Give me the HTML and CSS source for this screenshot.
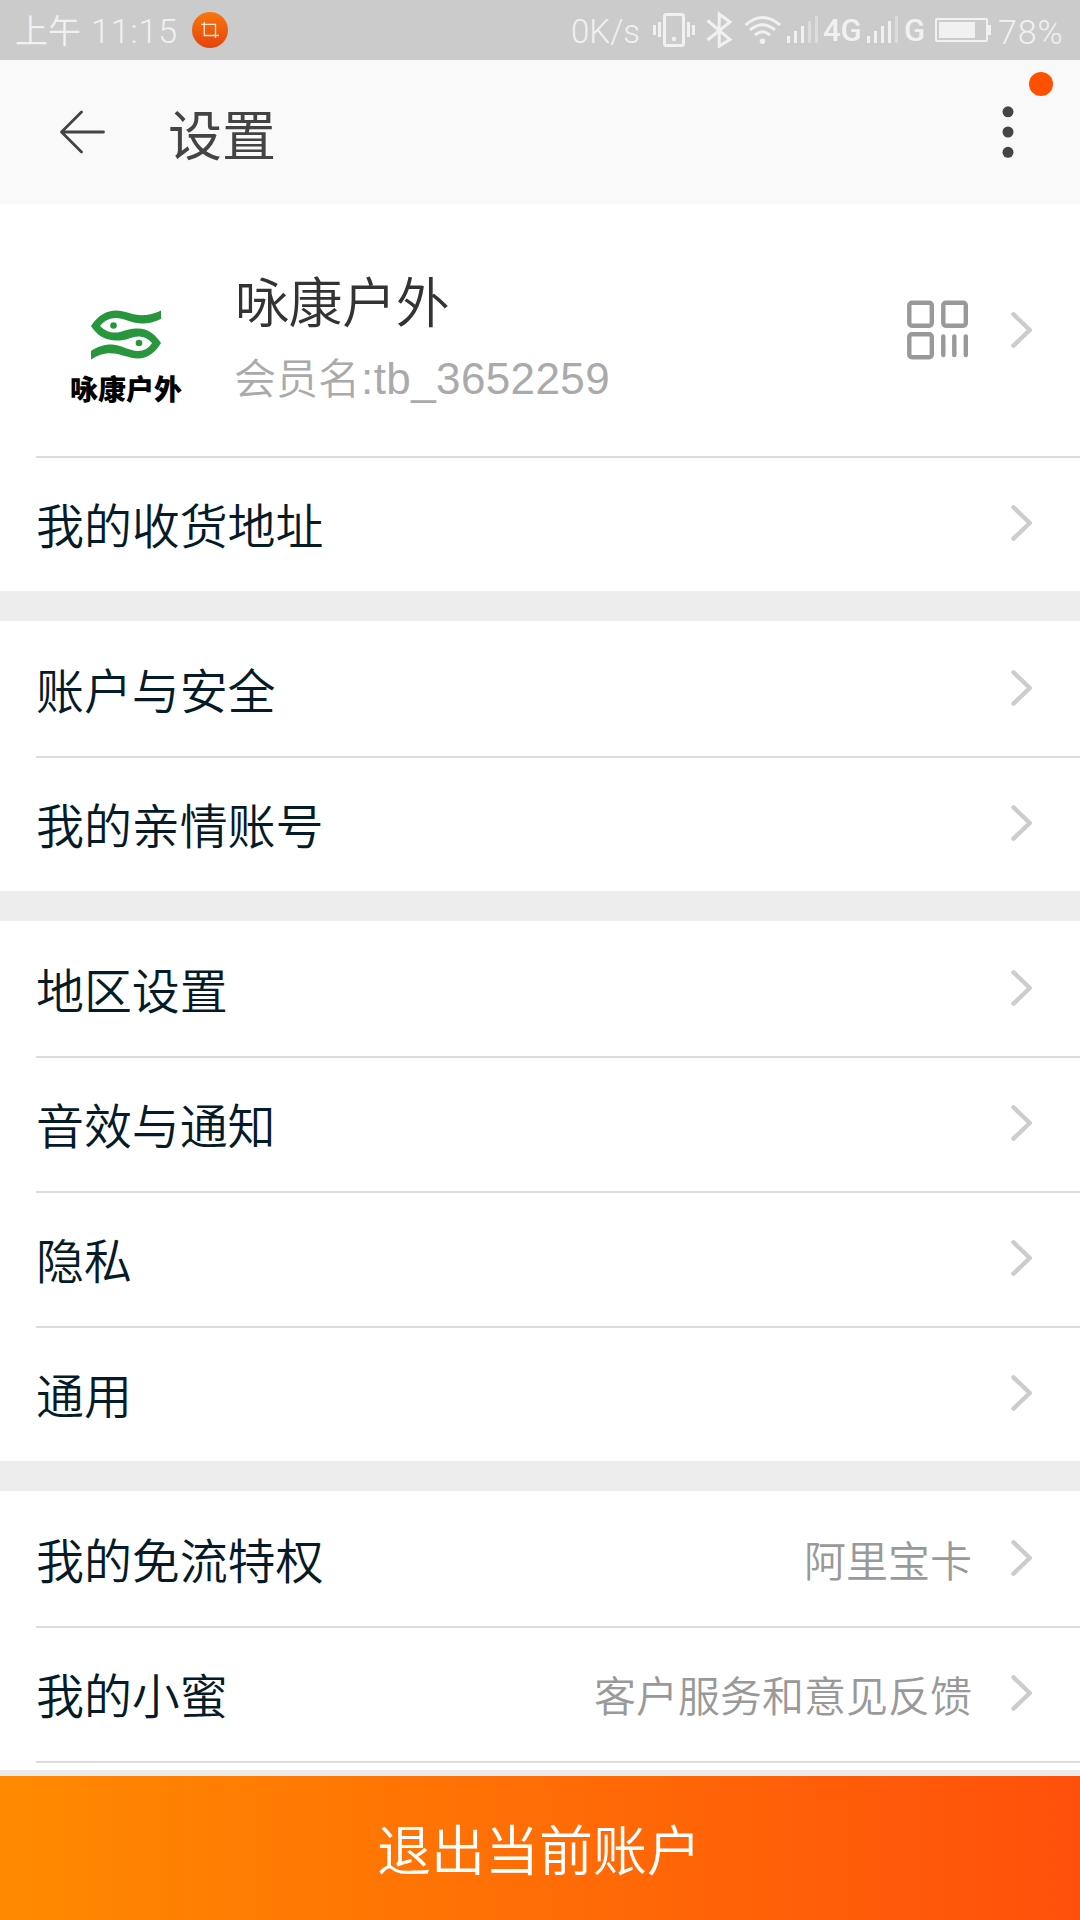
FILE: index.html
```html
<!DOCTYPE html>
<html lang="zh-CN">
<head>
<meta charset="utf-8">
<title>设置</title>
<link rel="stylesheet" href="styles.css">
</head>
<body>
<svg class="defs" width="0" height="0">
  <symbol id="chevron" viewBox="0 0 24 40"><path d="M3.500 4.300 19.800 20 3.500 35.700" fill="none" stroke="#ccc" stroke-width="4.400" stroke-linecap="round" stroke-linejoin="round"/></symbol>
</svg>
<div class="screen">
  <div class="status">
    <span class="clock">上午 <span class="time">11:15</span></span>
    <svg class="crop" width="36" height="36" viewBox="0 0 36 36">
      <defs><linearGradient id="og" x1="0" y1="0" x2="0" y2="1"><stop offset="0" stop-color="#f8780c"/><stop offset="1" stop-color="#e5430e"/></linearGradient></defs>
      <circle cx="18" cy="18" r="18" fill="url(#og)"/>
      <path d="M9 12.300H23.500V26M12.300 10V23.500H27" fill="none" stroke="#fde3d0" stroke-width="1.300"/>
    </svg>
    <span class="speed">0K/s</span>
    <svg class="indicators" width="172" height="60" viewBox="650 0 172 60">
      <g fill="none" stroke="#f1f1f1" stroke-width="3">
        <rect x="664.500" y="14.500" width="19" height="31" rx="2"/>
        <path d="M654.500 25v10M659.500 22v15M688.500 22v15M693.500 25v10"/>
        <path d="M707.500 20.500 730 39.500 719.200 46V14L730 22 707.500 40"/>
        <path d="M745.500 25q17-15 34.500 0M750 30q12.500-10.500 25 0M755 35q7.500-6.500 15 0"/>
        <path d="M788.500 36v7M795.500 31v12M802.500 26v17"/>
        <path d="M809.500 21v22M816.500 16v27" stroke="#dcdcdc"/>
      </g>
      <circle cx="674" cy="39" r="2.200" fill="#f1f1f1"/>
      <circle cx="762.500" cy="41.300" r="2.800" fill="#f1f1f1"/>
    </svg>
    <span class="net net-4g">4G</span>
    <svg class="bars" width="34" height="60" viewBox="866 0 34 60">
      <path d="M868.500 36v7M875.500 31v12M882.500 26v17M889.500 21v22" stroke="#f1f1f1" stroke-width="3"/>
      <path d="M896.500 16v27" stroke="#dcdcdc" stroke-width="3"/>
    </svg>
    <span class="net net-g">G</span>
    <svg class="battery" width="56" height="24" viewBox="0 0 56 24">
      <rect x="1" y="1" width="51" height="22" rx="1" fill="none" stroke="#f1f1f1" stroke-width="2"/>
      <path d="M4 4h36v16H4zM53 7h3v10h-3z" fill="#f1f1f1"/>
    </svg>
    <span class="percent">78%</span>
  </div>

  <header class="header">
    <svg class="back" width="48" height="44" viewBox="0 0 48 44" fill="none" stroke="#444" stroke-width="2.800" stroke-linecap="round" stroke-linejoin="round"><path d="M23.500 2 3.500 22l20 20M3.500 22H45.500"/></svg>
    <h1 class="title">设置</h1>
    <svg class="more" width="12" height="52" viewBox="0 0 12 52" fill="#444"><circle cx="6" cy="5.800" r="5.500"/><circle cx="6" cy="26" r="5.500"/><circle cx="6" cy="46.300" r="5.500"/></svg>
    <span class="badge"></span>
  </header>

  <main class="list">
    <section class="group">
      <div class="profile">
        <div class="avatar">
          <svg class="fish" width="70" height="50" viewBox="0 0 70 50">
            <path fill-rule="evenodd" d="M0 16C7 5 16 .5 25 .5C38 .5 48 11 70 .5V9C62 12.500 56 14 50 13.500C40 13 32 8 25 8C18 8 13 11 9 16C15 22 22 23.500 29 22C36 20 40 18.500 47 18.500C57 18.500 64 24 70 33C64 43 56 48.500 47 48.500C33 48.500 21 36 0 49.500V41C7 36 14 34.500 21 34.500C31 35 38 41 47 41C53 41 58 38 61 33C56 27 49 25.500 43 27C36 29 32 31 24 30.500C13 30 6 25 0 16Z" fill="#27963c"/>
            <circle cx="22.500" cy="15.500" r="3.300" fill="#27963c"/><circle cx="48" cy="33" r="3.300" fill="#27963c"/>
          </svg>
          <span class="brand">咏康户外</span>
        </div>
        <div class="who">
          <div class="name">咏康户外</div>
          <div class="member">会员名<span class="member-id">:tb_3652259</span></div>
        </div>
        <svg class="qr" width="62" height="60" viewBox="0 0 62 60" fill="none" stroke="#999" stroke-width="4.400" stroke-linecap="round">
          <rect x="2.300" y="2.700" width="22.500" height="23" rx="2.500"/><rect x="36.300" y="2.700" width="22.500" height="23" rx="2.500"/><rect x="2.300" y="34.200" width="22.500" height="23" rx="2.500"/>
          <path d="M36.300 36.500V55M47.300 36.500V55M58.800 36.500V55"/>
        </svg>
        <svg class="chev"><use href="#chevron"/></svg>
      </div>
      <div class="row"><span class="label">我的收货地址</span><svg class="chev"><use href="#chevron"/></svg></div>
    </section>
    <section class="group">
      <div class="row"><span class="label">账户与安全</span><svg class="chev"><use href="#chevron"/></svg></div>
      <div class="row"><span class="label">我的亲情账号</span><svg class="chev"><use href="#chevron"/></svg></div>
    </section>
    <section class="group">
      <div class="row"><span class="label">地区设置</span><svg class="chev"><use href="#chevron"/></svg></div>
      <div class="row"><span class="label">音效与通知</span><svg class="chev"><use href="#chevron"/></svg></div>
      <div class="row"><span class="label">隐私</span><svg class="chev"><use href="#chevron"/></svg></div>
      <div class="row"><span class="label">通用</span><svg class="chev"><use href="#chevron"/></svg></div>
    </section>
    <section class="group">
      <div class="row"><span class="label">我的免流特权</span><span class="value">阿里宝卡</span><svg class="chev"><use href="#chevron"/></svg></div>
      <div class="row"><span class="label">我的小蜜</span><span class="value">客户服务和意见反馈</span><svg class="chev"><use href="#chevron"/></svg></div>
      <div class="row"></div>
    </section>
  </main>
  <footer class="footer"><button class="logout">退出当前账户</button></footer>
</div>
</body>
</html>
```
FILE: styles.css
```css
* { box-sizing: border-box; }
body { margin: 0; background: #fff; font-family: "Noto Sans CJK SC", sans-serif; font-weight: 350; }
.defs { position: absolute; }
.screen { width: 1080px; height: 1920px; display: flex; flex-direction: column; overflow: hidden; }
.screen svg { flex: none; display: block; }

.status { height: 60px; flex: none; display: flex; align-items: center; background: #cbcbcb; color: #f1f1f1; font: 350 33px/60px Roboto, "Noto Sans CJK SC", sans-serif; white-space: nowrap; }
.clock { width: 176px; padding-left: 15px; padding-top: 3px; }
.time { font-size: 34px; letter-spacing: 0.9px; margin-left: 2px; }
.crop { margin-left: 16px; }
.speed { margin-left: 343px; width: 79px; padding-top: 4px; }
.net { font-weight: 500; font-size: 31px; padding-top: 1px; }
.net-4g { width: 44px; padding-left: 1px; }
.net-g { width: 31px; margin-left: 4px; }
.percent { margin-left: 7px; padding-top: 4px; font-size: 34px; letter-spacing: 0.9px; }

.header { height: 144px; flex: none; position: relative; display: flex; align-items: center; background: #f9f9f9; padding: 0 66px 0 58px; }
.title { margin: 0 auto 0 62px; padding-top: 1px; font-size: 54px; line-height: 72px; font-weight: 400; color: #444; }
.badge { position: absolute; top: 12px; right: 27px; width: 24px; height: 24px; border-radius: 50%; background: #ff5000; }

.list { flex: 1; min-height: 0; overflow: hidden; background: #ededed; border-bottom: 6px solid #ebebeb; display: flex; flex-direction: column; gap: 30px; }
.group { flex: none; background: #fff; padding-left: 36px; }
.row { height: 135px; display: flex; align-items: center; padding: 0 46px 1px 0; }
.row + .row, .profile + .row { box-shadow: inset 0 2px #dcdcdc; }
.label { font-size: 48px; line-height: 72px; padding-bottom: 1px; letter-spacing: -0.1px; color: #051b28; margin-right: auto; }
.value { font-size: 42px; line-height: 60px; padding-top: 1px; color: #999; }
.chev { width: 24px; height: 40px; margin-left: 38px; }

.profile { height: 252px; display: flex; align-items: center; padding-right: 46px; }
.avatar { width: 112px; margin-left: 34px; padding-top: 54px; display: flex; flex-direction: column; align-items: center; gap: 12px; }
.brand { font-size: 28px; line-height: 32px; font-weight: 900; color: #000; white-space: nowrap; }
.who { margin-left: 53px; margin-right: auto; padding-top: 12px; }
.name { font-size: 54px; line-height: 74px; letter-spacing: -0.4px; color: #333; }
.member { font-size: 42px; line-height: 60px; margin-top: 9px; margin-left: -1px; color: #aaa; white-space: nowrap; }
.member-id { font-family: "Liberation Sans", sans-serif; font-size: 44px; letter-spacing: 0.4px; margin-left: 1px; }
.profile .qr { margin-right: 1px; }
.profile .chev { margin-left: 40px; }

.footer { height: 144px; flex: none; display: flex; background: linear-gradient(90deg, #ff8a00, #ff500b); }
.logout { flex: 1; border: 0; background: none; color: #fff; font: 350 54px/72px "Noto Sans CJK SC", sans-serif; padding: 0 2px 0 0; }
```
